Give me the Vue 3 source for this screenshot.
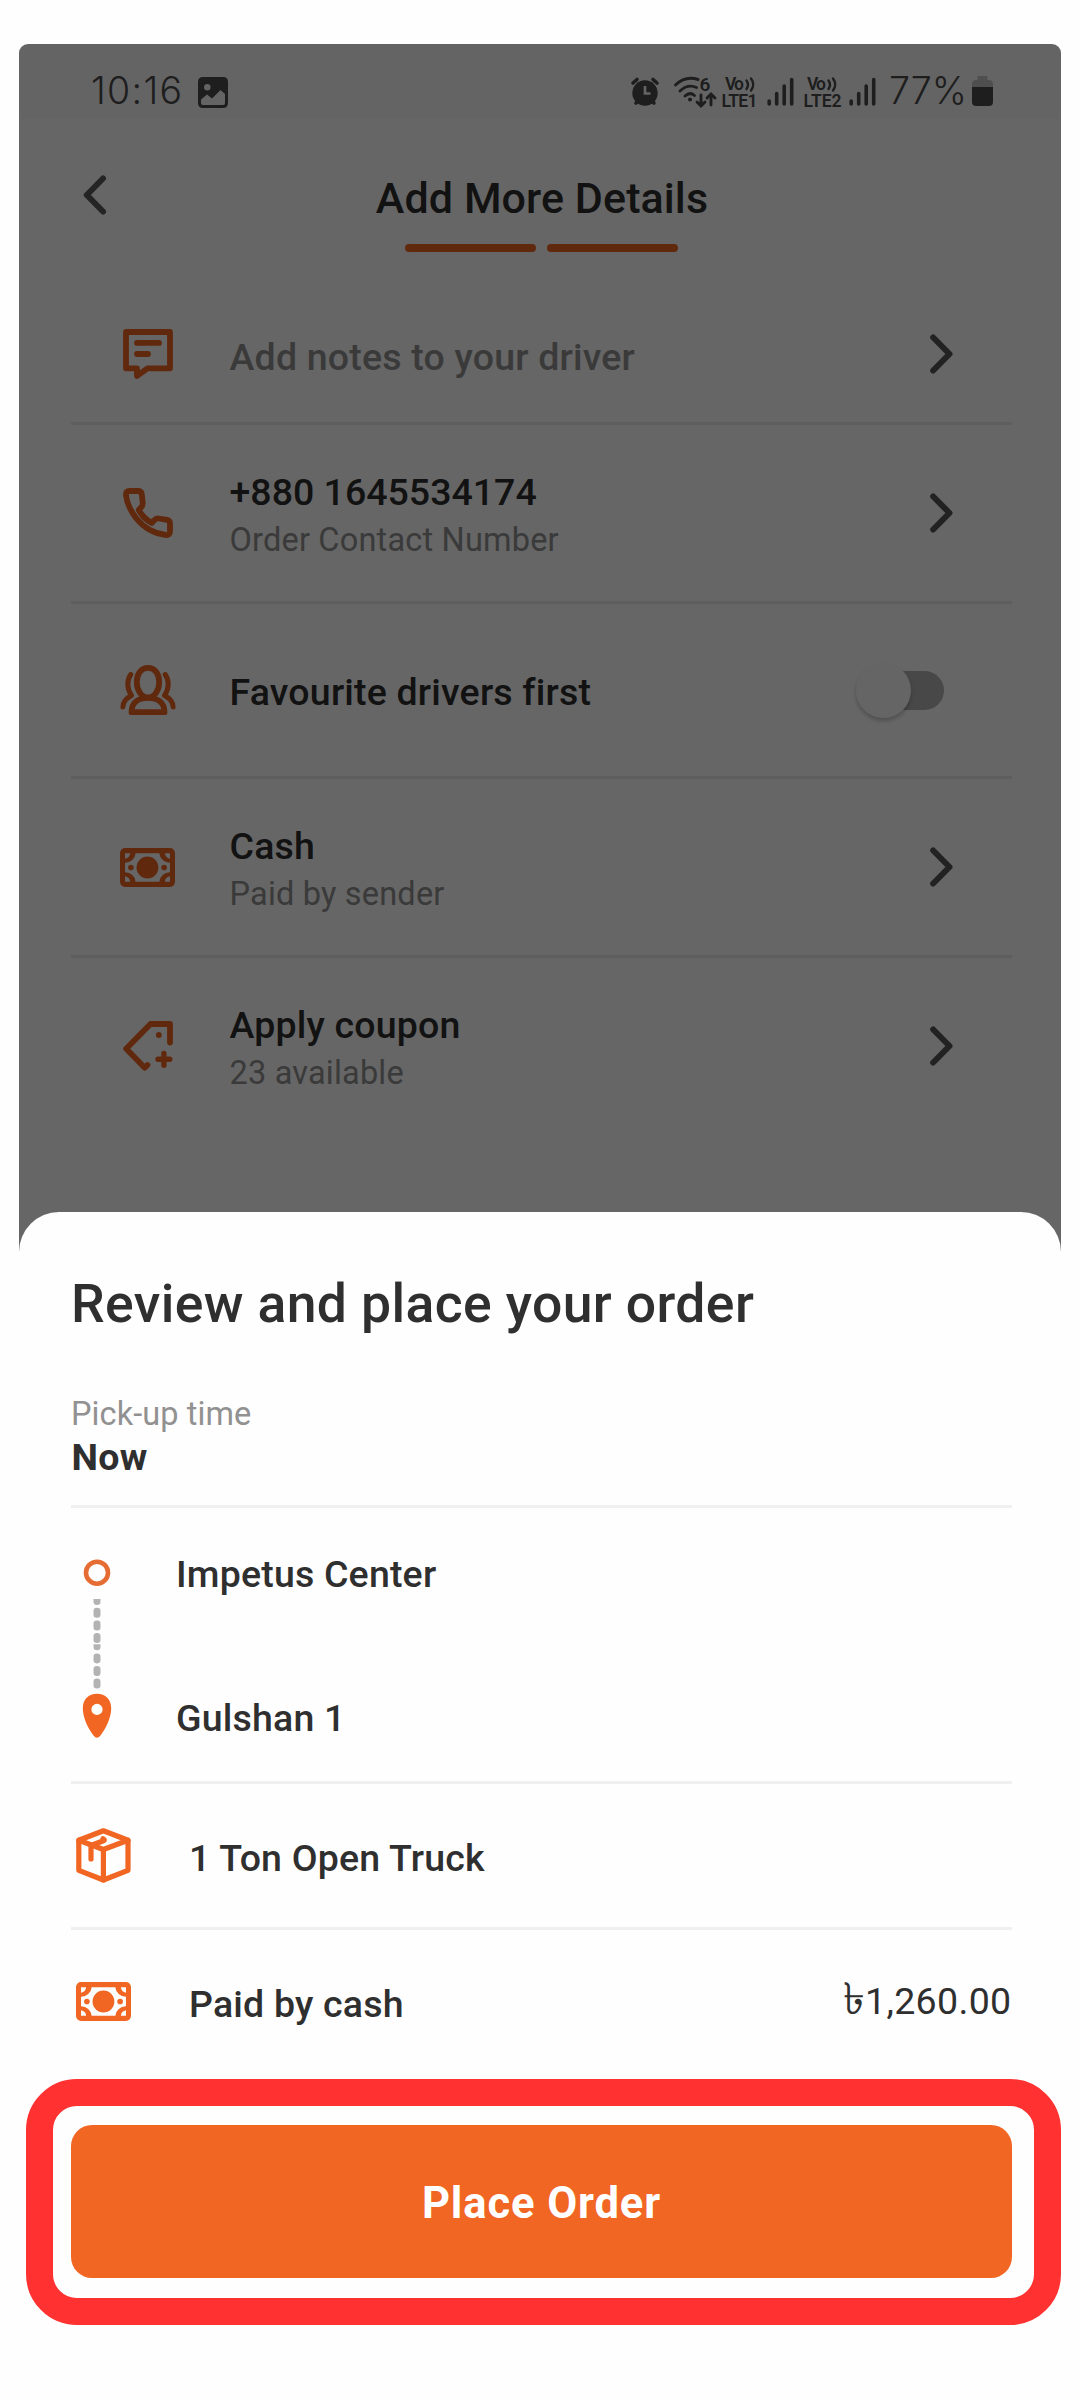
<script setup>
const rows = [
  { icon: 'note', title: 'Add notes to your driver', muted: true, height: 136 },
  { icon: 'phone', title: '+880 1645534174', sub: 'Order Contact Number', height: 176 },
  { icon: 'people', title: 'Favourite drivers first', toggle: true, height: 172 },
  { icon: 'cash', title: 'Cash', sub: 'Paid by sender', height: 176 },
  { icon: 'coupon', title: 'Apply coupon', sub: '23 available', height: 176 },
]
const signals = ['LTE1', 'LTE2']
const cashPath =
  'M5 0H49.5A5 5 0 0 1 54.5 5V33.4A5 5 0 0 1 49.5 38.4H5A5 5 0 0 1 0 33.4V5A5 5 0 0 1 5 0Z' +
  'M15.5 5.2H39A10.3 10 0 0 0 49.5 14.5V24A10.3 10 0 0 0 39 33.2H15.5A10.3 10 0 0 0 5 24V14.5A10.3 10 0 0 0 15.5 5.2Z' +
  'M5 5.2V10.6A6 6 0 0 0 10 5.2ZM49.5 5.2V10.6A6 6 0 0 1 44.5 5.2ZM5 33.2V27.8A6 6 0 0 1 10 33.2ZM49.5 33.2V27.8A6 6 0 0 0 44.5 33.2Z'
</script>

<template>
  <main class="page">
    <div class="phone">
      <section class="details">
        <header class="status">
          <span class="clock">10:16</span>
          <svg class="gallery" width="30" height="31" viewBox="0 0 30 31">
            <path fill="#4b4b4b" fill-rule="evenodd" d="M5 0H25Q30 0 30 5V26Q30 31 25 31H5Q0 31 0 26V5Q0 0 5 0ZM9.3 7A3.2 3.2 0 1 0 9.3 13.4A3.2 3.2 0 1 0 9.3 7ZM3 22.5L9 17.5L14 21.5L22.5 13L27 17V26Q27 28 25 28H5Q3 28 3 26Z" />
          </svg>
          <div class="tray">
            <svg width="30" height="32" viewBox="0 0 30 32" class="alarm">
              <circle cx="15" cy="18" r="12.7" fill="#4b4b4b" />
              <path d="M3 8L7 4.5M27 8L23 4.5M6 28L8 26M24 28L22 26" stroke="#4b4b4b" stroke-width="3.6" stroke-linecap="round" />
              <path d="M15 11V18.5H20.5" fill="none" stroke="#fafafa" stroke-width="2.7" />
            </svg>
            <svg width="44" height="34" viewBox="0 0 44 34" class="wifi">
              <g fill="none" stroke="#4b4b4b" stroke-width="2.9" stroke-linecap="round">
                <path d="M2.5 10Q12.5 .5 25 4.5M7 16Q15 8.5 23.5 12.5M12 21Q17 16.5 21.5 20.5" />
                <path d="M28 20V30M24 27L28 31L32 27M38 30V20M34 23L38 19L42 23" />
              </g>
              <circle cx="17" cy="24.5" r="2" fill="#4b4b4b" />
              <text x="26.5" y="16" font-size="19" font-weight="600" fill="#4b4b4b">6</text>
            </svg>
            <template v-for="name in signals" :key="name">
              <svg width="38" height="34" viewBox="0 0 38 34" class="volte">
                <g fill="#4b4b4b" font-weight="600">
                  <text x="4" y="15.3" font-size="17.5" textLength="19">Vo</text>
                  <text x="0.5" y="31.7" font-size="17.5" :textLength="name === 'LTE1' ? 36 : 38">{{ name }}</text>
                </g>
                <path d="M25.5 5.5Q28.5 9.5 25.5 14M30 3.5Q34.5 9.5 30 15.5" fill="none" stroke="#4b4b4b" stroke-width="2.4" stroke-linecap="round" />
              </svg>
              <svg width="27" height="32" viewBox="0 0 27 32" class="bars">
                <path d="M2.2 26V29M9.7 18.5V29M17.2 11V29M24.7 4.5V29" stroke="#4b4b4b" stroke-width="3.6" stroke-linecap="round" />
              </svg>
            </template>
            <span class="percent">77%</span>
            <svg width="21" height="32" viewBox="0 0 21 32">
              <path d="M5.5 1H15.5V5H17Q21 5 21 9V14H0V9Q0 5 4 5H5.5Z" fill="#c6c6c6" />
              <path d="M0 12H21V27Q21 31 17 31H4Q0 31 0 27Z" fill="#4b4b4b" />
            </svg>
          </div>
        </header>

        <div class="appbar">
          <svg class="back" width="24" height="40" viewBox="0 0 24 40">
            <path d="M20 3.5L3.8 20L20 36.5" fill="none" stroke="#5a5a5a" stroke-width="6" stroke-linecap="round" stroke-linejoin="round" />
          </svg>
          <h1>Add More Details</h1>
        </div>
        <div class="steps"><i></i><i></i></div>

        <ul class="list">
          <li v-for="row in rows" :key="row.icon" :style="{ height: row.height + 'px' }">
            <span class="icon">
              <svg v-if="row.icon === 'note'" width="50" height="50" viewBox="0 0 50 50">
                <g class="line" stroke-width="5.8">
                  <path d="M3 3H47V39.3H24.5L14 47V39.3H3Z" />
                  <path d="M14 13.9H36M14 25H25" />
                </g>
              </svg>
              <svg v-else-if="row.icon === 'phone'" width="50" height="50" viewBox="0 0 50 50">
                <path class="line" stroke-width="5.8" d="M6.5 3H15Q18.3 3 18.7 6L19.7 14.5Q20 17.5 18 19.5L15.7 22Q20.5 30.5 28.7 35L31.5 32Q33.5 30 36 30.5L44 31.9Q47 32.5 47 35.5V43.5Q47 47.3 43 47Q25 45 13 30Q4 18 3 7Q3 3 6.5 3Z" />
              </svg>
              <svg v-else-if="row.icon === 'people'" width="56" height="50" viewBox="0 0 56 50">
                <g class="line" stroke-width="5.8">
                  <path d="M28 2.8C35.2 2.8 39.2 9 39.2 17C39.2 25.5 34.5 32.5 28 32.5S16.8 25.5 16.8 17C16.8 9 20.8 2.8 28 2.8Z" />
                  <path d="M11.5 47.2C11.5 38 18 32.8 28 32.8S44.5 38 44.500 47.200Z" />
                </g>
                <g class="line" stroke-width="5">
                  <path d="M10.800 9.500C6.500 15.500 7 24 11.500 30.500C5.500 33.500 3 37 2.900 42" />
                  <path d="M45.200 9.500C49.500 15.500 49 24 44.500 30.500C50.500 33.500 53 37 53.100 42" />
                </g>
              </svg>
              <svg v-else-if="row.icon === 'cash'" width="55" height="39" viewBox="0 0 54.5 38.4">
                <path :d="cashPath" class="solid" fill-rule="evenodd" />
                <circle cx="27.2" cy="19.2" r="10.8" class="solid" />
                <circle cx="10.8" cy="19.2" r="2.8" class="solid" />
                <circle cx="43.7" cy="19.2" r="2.8" class="solid" />
              </svg>
              <svg v-else width="50" height="50" viewBox="0 0 50 50">
                <path class="line" stroke-width="5.8" d="M47 21.5V3H27.5L3.2 27.8L21.7 46.7L24.5 44" />
                <circle cx="35.8" cy="14" r="2.9" class="solid" />
                <path class="line" stroke-width="5.4" d="M35 38.3H46.8M40.9 32.4V44.2" />
              </svg>
            </span>
            <div class="copy" :class="{ single: !row.sub }">
              <p class="title" :class="{ muted: row.muted, number: row.icon === 'phone' }">{{ row.title }}</p>
              <p v-if="row.sub" class="sub">{{ row.sub }}</p>
            </div>
            <span v-if="row.toggle" class="toggle"><i></i></span>
            <svg v-else class="chevron" width="23" height="40" viewBox="0 0 23 40">
              <path d="M3.2 3.5L19.5 20L3.2 36.5" fill="none" stroke="#565656" stroke-width="6" stroke-linecap="round" stroke-linejoin="round" />
            </svg>
          </li>
        </ul>
        <div class="scrim"></div>
      </section>

      <section class="sheet">
        <h2>Review and place your order</h2>
        <div class="time">
          <p class="label">Pick-up time</p>
          <p class="now">Now</p>
        </div>

        <div class="route">
          <svg width="28" height="192" viewBox="0 0 28 192">
            <circle cx="14" cy="22.7" r="11" fill="none" stroke="#e56d33" stroke-width="4.6" />
            <g fill="#b3b3b3">
              <path d="M10.5 49H17.5V52Q17.5 55 14 55T10.5 52ZM10.5 94.3H17.5V97Q17.5 100.3 14 100.3T10.5 97Z" />
              <rect v-for="y in [57.7, 70.5, 83, 103.4, 116, 128.5]" :key="y" x="10.5" :y="y" width="7" height="10" rx="3.3" />
            </g>
            <path fill="#f16622" fill-rule="evenodd" d="M14 143.800C22.500 143.800 28.200 149.500 28.200 158.500C28.200 168 22.500 179 17.300 185.800Q14 189.800 10.700 185.800C5.500 179 -.2 168 -.2 158.500C-.2 149.500 5.500 143.800 14 143.800ZM14 153.800A5.600 5.600 0 1 0 14 165A5.600 5.600 0 1 0 14 153.800Z" />
          </svg>
          <div class="stops">
            <p class="title">Impetus Center</p>
            <p class="title">Gulshan 1</p>
          </div>
        </div>

        <div class="summary ruled">
          <svg width="55" height="55" viewBox="0 0 55 55">
            <g class="line" stroke-width="5.2">
              <path d="M27.4 2.8L52 12.3V42.3L27.4 52L2.8 42.3V12.3Z" />
              <path d="M2.8 12.3L27.4 21.5L52 12.3M27.4 21.5V52" />
              <path d="M15 31V17.5L28 12.500Q29 12 27 10.800" />
            </g>
          </svg>
          <p class="title">1 Ton Open Truck</p>
        </div>
        <div class="summary">
          <svg width="55" height="39" viewBox="0 0 54.5 38.4">
            <path :d="cashPath" class="solid" fill-rule="evenodd" />
            <circle cx="27.2" cy="19.2" r="10.8" class="solid" />
            <circle cx="10.8" cy="19.2" r="2.8" class="solid" />
            <circle cx="43.7" cy="19.2" r="2.8" class="solid" />
          </svg>
          <p class="title">Paid by cash</p>
          <p class="price"><span class="taka">৳</span>1,260.00</p>
        </div>

        <div class="highlight">
          <button type="button">Place Order</button>
        </div>
      </section>
    </div>
  </main>
</template>

<style>
body {
  margin: 0;
  background: #fefefe;
}
</style>

<style scoped>
* {
  box-sizing: border-box;
}
.page {
  width: 1080px;
  height: 2400px;
  padding: 44px 19px 0;
  background: #fefefe;
  font-family: Roboto, "Liberation Sans", sans-serif;
  color: #2f2f2f;
  overflow: hidden;
}
h1, h2, p, ul {
  margin: 0;
  padding: 0;
}
svg {
  display: block;
  flex: none;
  overflow: visible;
}
.line {
  fill: none;
  stroke: #f16622;
  stroke-linecap: round;
  stroke-linejoin: round;
}
.solid {
  fill: #f16622;
}
.details {
  position: relative;
  height: 1210px;
  border-radius: 9px 9px 0 0;
  background: #fff;
  overflow: hidden;
}
.scrim {
  position: absolute;
  inset: 0;
  background: rgba(0, 0, 0, 0.6);
}
.status {
  display: flex;
  align-items: flex-start;
  height: 75px;
  padding: 31px 68px 0 72px;
  background: #fafafa;
}
.clock,
.percent {
  font-family: Inter, Roboto, sans-serif;
  font-size: 37.5px;
  font-weight: 350;
  line-height: 32px;
  color: #4b4b4b;
}
.clock {
  width: 107px;
  letter-spacing: 1.3px;
}
.gallery {
  margin-top: 2px;
}
.tray {
  display: flex;
  margin-left: auto;
}
.wifi {
  margin: 0 4px 0 13px;
}
.volte {
  margin-right: 8px;
}
.bars {
  margin-right: 9px;
}
.percent {
  width: 77px;
  margin: 0 6px 0 4px;
}
.appbar {
  display: flex;
  align-items: center;
  height: 82px;
  margin-top: 35px;
  padding: 0 65px 0 64px;
}
.appbar h1 {
  flex: 1;
  padding: 5px 19px 0 0;
  text-align: center;
  font-size: 43px;
  line-height: 52px;
  font-weight: 500;
  letter-spacing: 0.09px;
}
.steps {
  display: flex;
  justify-content: center;
  gap: 11px;
  margin: 8px 0 0 3px;
}
.steps i {
  width: 131px;
  height: 8px;
  border-radius: 4px;
  background: #f16622;
}
.list {
  margin: 34px 49px 0 52px;
  list-style: none;
}
.list li {
  display: flex;
  align-items: center;
  box-sizing: content-box;
  padding: 0 59px 0 48.5px;
  border-bottom: 3px solid #ebebeb;
}
.list li:last-child {
  border: 0;
}
.icon {
  display: flex;
  justify-content: center;
  width: 56px;
  margin-right: 54px;
}
.copy {
  flex: 1;
  padding-top: 5px;
}
.copy.single {
  padding-top: 3px;
}
.title {
  font-size: 37.5px;
  line-height: 48px;
  font-weight: 500;
  letter-spacing: 0.19px;
  white-space: nowrap;
}
.title.number {
  letter-spacing: 0;
}
.title.muted {
  padding-top: 2px;
  color: #919191;
}
.sub,
.label {
  font-size: 32.5px;
  line-height: 48px;
  letter-spacing: 0.19px;
  color: #919191;
}
.toggle {
  display: flex;
  align-items: center;
  width: 80px;
  height: 39px;
  margin-right: 9px;
  border-radius: 20px;
  background: #b4b4b4;
}
.toggle i {
  width: 55px;
  height: 55px;
  margin-left: -8px;
  flex: none;
  border-radius: 50%;
  background: #fdfdfd;
  box-shadow: 0 3px 4px rgba(0, 0, 0, 0.22);
}
.sheet {
  position: relative;
  margin-top: -42.5px;
  padding: 60px 49.5px 0 52px;
  border-radius: 40px 40px 0 0;
  background: #fefefe;
}
h2 {
  font-size: 53.5px;
  line-height: 64px;
  font-weight: 500;
  letter-spacing: 0.38px;
}
.time {
  padding: 56px 0 27px;
  border-bottom: 3px solid #f0f0f0;
}
.label {
  line-height: 44px;
  letter-spacing: 0.08px;
}
.now {
  padding-left: 0.5px;
  font-size: 37.5px;
  line-height: 42px;
  font-weight: 700;
  letter-spacing: 0.3px;
}
.route {
  display: flex;
  height: 276px;
  padding: 42px 0 0 12px;
  border-bottom: 3px solid #f0f0f0;
}
.stops {
  display: flex;
  flex-direction: column;
  gap: 96px;
  margin-left: 65px;
}
.summary {
  display: flex;
  align-items: center;
  height: 143px;
  padding-left: 5px;
}
.summary.ruled {
  height: 146px;
  border-bottom: 3px solid #f0f0f0;
}
.summary .title {
  margin-left: 58px;
  padding-top: 5px;
}
.price {
  margin-left: auto;
  padding-bottom: 1px;
  font-size: 37.5px;
  line-height: 48px;
  letter-spacing: 0.34px;
}
.taka {
  font-size: 44px;
  line-height: 0;
}
.highlight {
  width: 1035px;
  height: 246px;
  margin: 6.5px 0 0 -45px;
  padding: 19px 22px 20px 18px;
  border: 27px solid #ff3131;
  border-radius: 51px;
}
button {
  display: block;
  width: 100%;
  height: 100%;
  padding: 5px 0 0;
  border: 0;
  border-radius: 21px;
  background: #f16622;
  color: #fff;
  font: 700 43.5px/52px Roboto, sans-serif;
  letter-spacing: 0.9px;
}
</style>
